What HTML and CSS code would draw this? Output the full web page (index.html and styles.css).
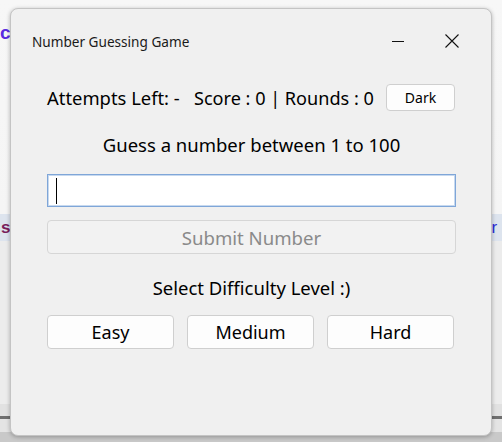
FILE: index.html
```html
<!DOCTYPE html>
<html lang="en">
<head>
<meta charset="utf-8">
<title>Number Guessing Game</title>
<link rel="stylesheet" href="styles.css">
</head>
<body>
<div class="desktop">
  <span class="bg-text bg-c">c</span>
  <span class="bg-text bg-s">s</span>
  <span class="bg-text bg-ar">ar</span>

  <div class="window">
    <div class="titlebar">
      <span class="title">Number Guessing Game</span>
      <div class="caption">
        <span class="cap-btn">
          <svg width="12" height="12" viewBox="0 0 12 12"><path d="M0 6.5H12" stroke="#111" stroke-width="1"/></svg>
        </span>
        <span class="cap-btn">
          <svg width="14" height="14" viewBox="0 0 14 14"><path d="M0.5 0.5L13.5 13.5M13.5 0.5L0.5 13.5" stroke="#111" stroke-width="1.1"/></svg>
        </span>
      </div>
    </div>

    <div class="content">
      <div class="status-row">
        <span class="stat attempts">Attempts Left: -</span>
        <span class="stat score">Score : 0 | Rounds : 0</span>
        <button class="btn btn-dark">Dark</button>
      </div>
      <div class="label guess-label">Guess a number between 1 to 100</div>
      <div class="entry"><span class="caret"></span></div>
      <button class="btn btn-submit" disabled>Submit Number</button>
      <div class="label diff-label">Select Difficulty Level :)</div>
      <div class="diff-row">
        <button class="btn btn-diff">Easy</button>
        <button class="btn btn-diff">Medium</button>
        <button class="btn btn-diff">Hard</button>
      </div>
    </div>
  </div>
</div>
</body>
</html>
```

FILE: styles.css
```css
html, body {
  margin: 0;
  padding: 0;
}
body {
  width: 502px;
  height: 442px;
  overflow: hidden;
  font-family: "Noto Sans", "Open Sans", sans-serif;
}
.desktop {
  position: relative;
  width: 502px;
  height: 442px;
  background: linear-gradient(to bottom,
    #f7f7f7 0px, #f5f5f5 214px,
    #dde4ee 214px, #dde4ee 241px,
    #ececec 241px, #ececec 404px,
    #e1e1e1 404px, #e1e1e1 416px,
    #6f6f6f 416px, #6f6f6f 419px,
    #e4e4e4 419px, #e4e4e4 432px,
    #c9c9c9 432px);
}
.bg-text {
  position: absolute;
  font-family: "Liberation Sans", Arial, sans-serif;
  font-size: 17px;
  line-height: 20px;
}
.bg-c { left: 0px; top: 23px; color: #5a2be0; font-weight: bold; font-size: 19px; }
.bg-s { left: 1px; top: 218px; color: #7a1d5c; font-weight: bold; }
.bg-ar { left: 482px; top: 218px; color: #2b2bd8; }

.window {
  position: absolute;
  left: 10px;
  top: 8px;
  width: 480px;
  height: 426px;
  background: #f0f0f0;
  border: 1px solid #c4c4c4;
  border-radius: 8px;
  box-shadow: 0 1px 4px rgba(0,0,0,0.28);
  display: flex;
  flex-direction: column;
}
.titlebar {
  height: 64px;
  display: flex;
  align-items: center;
  justify-content: space-between;
  padding-left: 21px;
  padding-right: 12px;
}
.title {
  font-size: 13.6px;
  color: #1a1a1a;
}
.caption {
  display: flex;
}
.cap-btn {
  width: 54px;
  height: 32px;
  display: flex;
  align-items: center;
  justify-content: center;
}
.content {
  display: flex;
  flex-direction: column;
  padding: 11px 35px 0 36px;
}
.status-row {
  display: flex;
  align-items: center;
  height: 27px;
  font-size: 18.4px;
  color: #000;
}
.attempts { width: 147px; white-space: nowrap; }
.score { width: 192px; white-space: nowrap; font-size: 18.1px; }
.btn {
  font-family: inherit;
  background: #fdfdfd;
  border: 1px solid #cfcfcf;
  border-radius: 4px;
  color: #000;
  padding: 0;
  box-sizing: border-box;
}
.btn-dark {
  width: 69px;
  height: 27px;
  font-size: 14px;
}
.label {
  text-align: center;
  font-size: 18.5px;
  color: #000;
  height: 24px;
  line-height: 24px;
}
.guess-label { margin-top: 22px; }
.entry {
  margin-top: 17px;
  height: 33px;
  box-sizing: border-box;
  background: #fff;
  border: 1px solid #7fa6d8;
  box-shadow: inset 0 0 0 1px #c7d9ef;
  display: flex;
  align-items: center;
  padding-left: 8px;
}
.caret {
  display: block;
  width: 1px;
  height: 26px;
  background: #000;
}
.btn-submit {
  margin-top: 13px;
  height: 34px;
  font-size: 18.6px;
  background: #f2f2f2;
  border-color: #d6d6d6;
  color: #8a8a8a;
}
.diff-label { margin-top: 22px; }
.diff-row {
  margin-top: 15px;
  display: grid;
  grid-template-columns: repeat(3, 127px);
  column-gap: 13px;
}
.btn-diff {
  height: 34px;
  font-size: 18px;
}
```
